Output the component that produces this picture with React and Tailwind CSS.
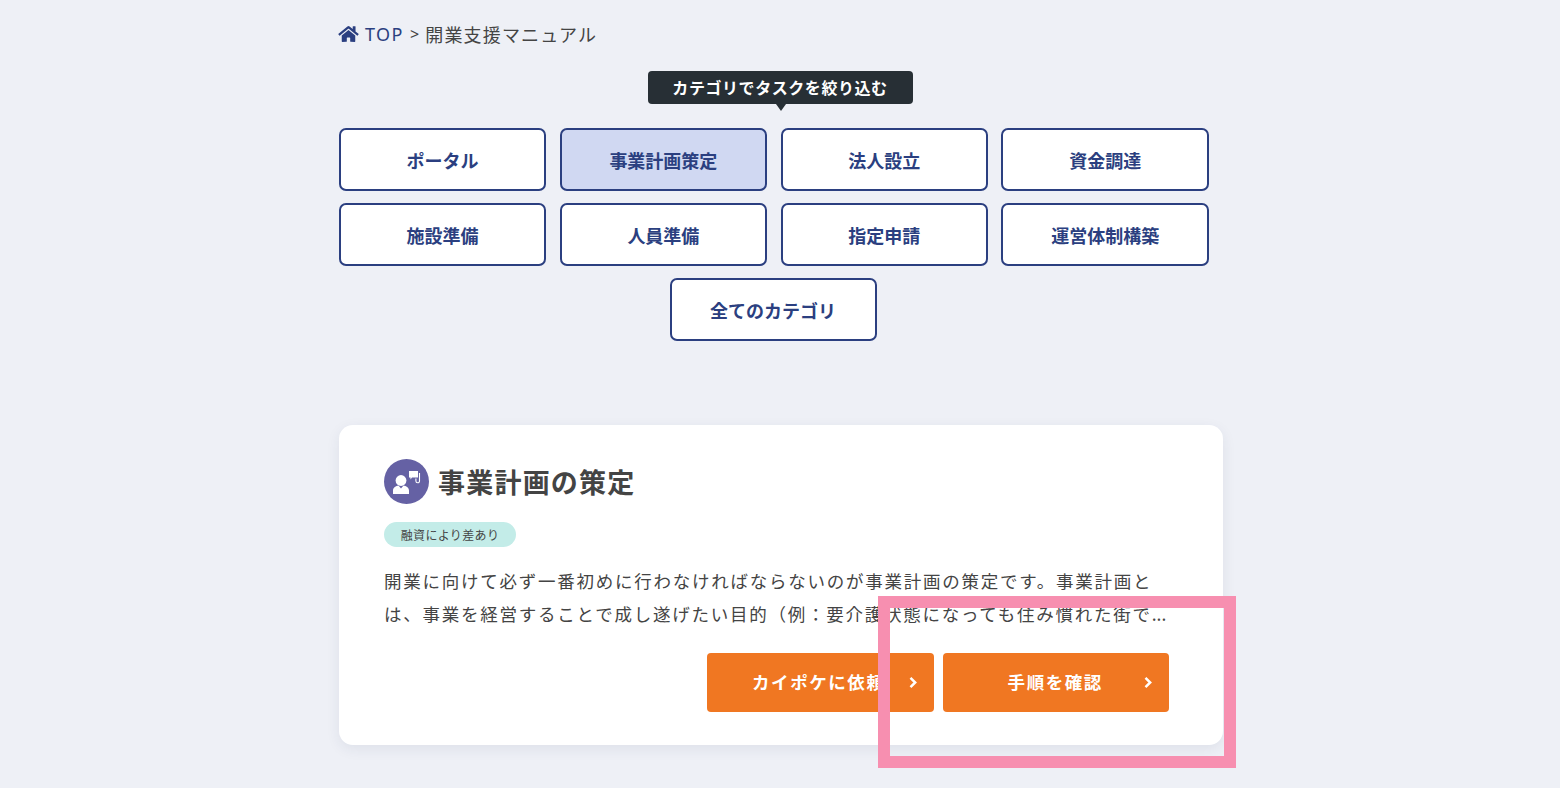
import React from "react";

const Cat = ({ children, active }) => (
  <div className={`h-[63px] pt-[1px] rounded-[7px] border-2 border-[#2b3f80] flex items-center justify-center text-[18px] font-bold text-[#2b3f80] ${active ? "bg-[#d0d8f2]" : "bg-white"}`}>
    {children}
  </div>
);

const Btn = ({ children, pl }) => (
  <div className="relative w-[226.5px] h-[59px] rounded-[4px] bg-[#f07722] flex items-center justify-center text-white text-[17.5px] font-bold tracking-[0.09em]">
    <span className={pl}>{children}</span>
    <svg className="absolute right-[16px] top-[23px]" width="10" height="13" viewBox="0 0 10 13" fill="none">
      <path d="M2.5 1.8 L7.2 6.5 L2.5 11.2" stroke="white" strokeWidth="2.5" />
    </svg>
  </div>
);

export default function App() {
  return (
    <div className="w-[1560px] h-[788px] overflow-hidden bg-[#eef0f6] relative font-['Noto_Sans_CJK_JP','Noto_Sans',sans-serif] text-[#444444]">
      <div className="w-[884px] ml-[339px]">
        <div className="pt-[21px] h-[71px] flex items-start text-[18px] leading-[26px] tracking-[0.065em]">
          <svg className="mt-[4px] mr-[6px] -ml-[1px]" width="21" height="18" viewBox="0 0 576 512" fill="#2b3f80">
            <path d="M280.4 148.3L96 300.1V464a16 16 0 0 0 16 16l112.1-.3a16 16 0 0 0 15.9-16V368a16 16 0 0 1 16-16h64a16 16 0 0 1 16 16v95.6a16 16 0 0 0 16 16.1L464 480a16 16 0 0 0 16-16V300L295.7 148.3a12.2 12.2 0 0 0-15.3 0zM571.6 251.5L488 182.6V44.1a12 12 0 0 0-12-12h-56a12 12 0 0 0-12 12v72.6L318.5 43a48 48 0 0 0-61 0L4.3 251.5a12 12 0 0 0-1.6 16.9l25.5 31A12 12 0 0 0 45.2 301l235.2-193.7a12.2 12.2 0 0 1 15.3 0L530.9 301a12 12 0 0 0 16.9-1.6l25.5-31a12 12 0 0 0-1.7-16.9z" />
          </svg>
          <span className="text-[#2b3f80] font-['Noto_Sans',sans-serif] tracking-[0.08em]">TOP</span>
          <span className="ml-[6px] mr-[5px] font-['Noto_Sans',sans-serif] text-[16px]">&gt;</span>
          <span>開業支援マニュアル</span>
        </div>

        <div className="w-[870px]">
          <div className="h-[57px] flex justify-center items-start pl-[12px]">
            <div className="relative w-[265px] h-[33px] rounded-[4px] bg-[#272f35] text-white text-[16px] font-bold tracking-[0.035em] leading-[32px] text-center">
              カテゴリでタスクを絞り込む
              <span className="absolute left-[128px] top-[33px] w-0 h-0 border-l-[5px] border-r-[5px] border-t-[7px] border-l-transparent border-r-transparent border-t-[#272f35]" />
            </div>
          </div>

          <div className="grid grid-cols-[207.2px_207.2px_207.2px_207.6px] gap-x-[13.6px] gap-y-[12px]">
            <Cat>ポータル</Cat>
            <Cat active>事業計画策定</Cat>
            <Cat>法人設立</Cat>
            <Cat>資金調達</Cat>
            <Cat>施設準備</Cat>
            <Cat>人員準備</Cat>
            <Cat>指定申請</Cat>
            <Cat>運営体制構築</Cat>
          </div>
          <div className="flex justify-center mt-[12px] pr-[2px]">
            <div className="w-[207px]"><Cat>全てのカテゴリ</Cat></div>
          </div>
        </div>

        <div className="mt-[84px] h-[320px] rounded-[14px] bg-white shadow-[0_4px_14px_rgba(40,50,90,0.08)] pl-[45px] pr-[46px] pt-[34px]">
          <div className="flex items-center gap-[9px] h-[45px]">
            <svg width="45" height="45" viewBox="0 0 45 45">
              <circle cx="22.5" cy="22.5" r="22.5" fill="#6561a4" />
              <circle cx="17" cy="21.5" r="5.4" fill="#fff" />
              <path d="M9 35v-3.5c0-3 3-4.6 5.5-5l2.5 3 2.5-3c2.5.4 5.5 2 5.5 5V35z" fill="#fff" />
              <path d="M25 12h9v6.5h-6l-1.5 2v-2H25z" fill="#fff" />
              <path d="M35.5 14v8a1.8 1.8 0 0 1-3.6 0v-2.5" stroke="#fff" strokeWidth="1.1" fill="none" />
            </svg>
            <h2 className="text-[27px] font-bold leading-[45px] tracking-[0.045em] text-[#444444]">事業計画の策定</h2>
          </div>
          <div className="mt-[18px] w-[132px] h-[25px] rounded-full bg-[#c3ece8] flex items-center justify-center text-[12px] tracking-[0.03em]">
            融資により差あり
          </div>
          <p className="mt-[17px] whitespace-nowrap text-[17.5px] leading-[33px] tracking-[1.75px] text-[#444444]">
            開業に向けて必ず一番初めに行わなければならないのが事業計画の策定です。事業計画と<br />
            は、事業を経営することで成し遂げたい目的（例：要介護状態になっても住み慣れた街で<span className="tracking-normal">...</span>
          </p>
          <div className="mt-[23px] flex justify-end gap-[9px] pr-[8px]">
            <Btn pl="pr-[3px]">カイポケに依頼</Btn>
            <Btn pl="pr-[1px]">手順を確認</Btn>
          </div>
        </div>
      </div>

      <div className="absolute left-[878px] top-[596px] w-[358px] h-[172px] border-[12px] border-[#f78fb0]" />
    </div>
  );
}
